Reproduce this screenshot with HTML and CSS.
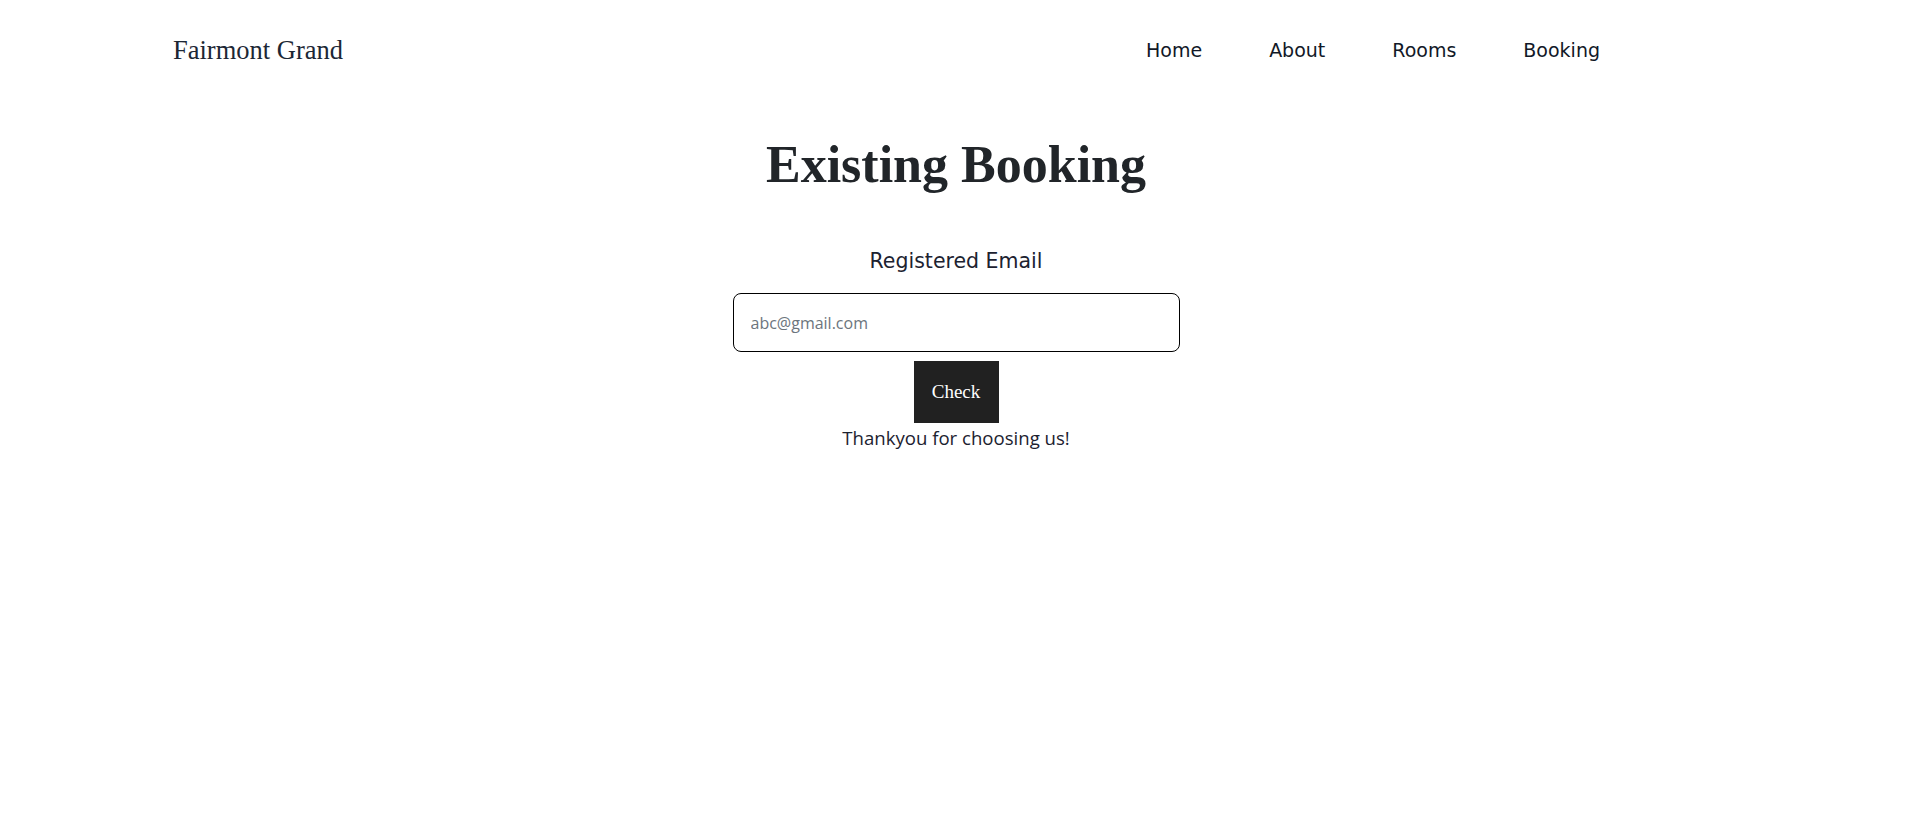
FILE: index.html
```html
<!DOCTYPE html>
<html lang="en">
<head>
<meta charset="utf-8">
<title>Fairmont Grand - Existing Booking</title>
<link rel="stylesheet" href="styles.css">
</head>
<body>
<header class="site-header">
  <a class="brand" href="#">Fairmont Grand</a>
  <nav class="nav">
    <a class="nav-link" href="#">Home</a>
    <a class="nav-link" href="#">About</a>
    <a class="nav-link" href="#">Rooms</a>
    <a class="nav-link" href="#">Booking</a>
  </nav>
</header>
<main class="main">
  <h1 class="title">Existing Booking</h1>
  <form class="form">
    <label class="label" for="email">Registered Email</label>
    <input class="input" id="email" type="email" placeholder="abc@gmail.com">
    <button class="btn" type="button">Check</button>
    <p class="note">Thankyou for choosing us!</p>
  </form>
</main>
</body>
</html>
```
FILE: styles.css
```css
html, body {
  margin: 0;
  padding: 0;
  background: #fff;
}
body {
  font-family: "Open Sans", "Noto Sans", sans-serif;
  color: #212529;
}
.site-header {
  display: flex;
  align-items: center;
  justify-content: space-between;
  padding: 30px 312px 0 173px;
  height: 40px;
}
.brand {
  font-family: "Liberation Serif", "Times New Roman", serif;
  font-size: 26.5px;
  color: #1c2735;
  text-decoration: none;
}
.nav {
  display: flex;
  gap: 67px;
}
.nav-link {
  font-family: "DejaVu Sans", "Noto Sans", sans-serif;
  font-size: 19px;
  color: #111827;
  text-decoration: none;
}
.main {
  display: flex;
  flex-direction: column;
  align-items: center;
}
.title {
  font-family: "Liberation Serif", "Times New Roman", serif;
  font-weight: bold;
  font-size: 52px;
  line-height: 1.2;
  margin: 64px 0 0;
  color: #212529;
}
.form {
  display: flex;
  flex-direction: column;
  align-items: center;
  margin-top: 53px;
}
.label {
  font-family: "DejaVu Sans", "Noto Sans", sans-serif;
  font-size: 20.5px;
  color: #1c2230;
  margin-bottom: 20px;
}
.input {
  box-sizing: border-box;
  width: 447px;
  height: 59px;
  border: 1px solid #000;
  border-radius: 8px;
  padding: 0 17px;
  font-family: "Open Sans", sans-serif;
  font-size: 16px;
  color: #212529;
  outline: none;
}
.input::placeholder {
  color: #6c757d;
}
.btn {
  margin-top: 9px;
  width: 85px;
  height: 62px;
  border: none;
  background: #212121;
  color: #fff;
  font-family: "Liberation Serif", "Times New Roman", serif;
  font-size: 19px;
  padding: 0;
}
.note {
  margin: 2px 0 0;
  font-family: "Open Sans", sans-serif;
  font-size: 18.6px;
  color: #1c2230;
}
```
